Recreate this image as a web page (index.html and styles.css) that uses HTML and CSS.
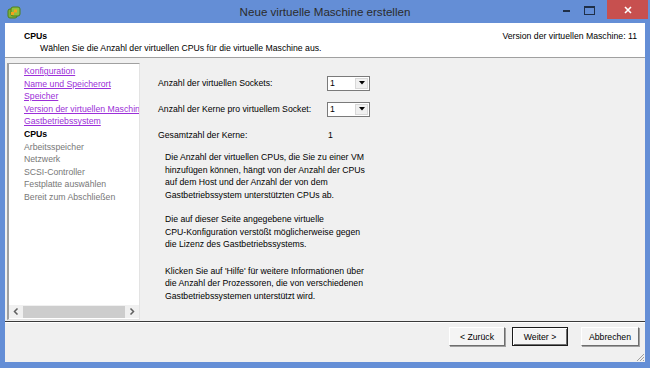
FILE: index.html
```html
<!DOCTYPE html>
<html lang="de">
<head>
<meta charset="utf-8">
<title>Neue virtuelle Maschine erstellen</title>
<link rel="stylesheet" href="styles.css">
</head>
<body>
<div class="window">
  <div class="titlebar">
    <div class="app-icon">
      <svg width="14" height="14" viewBox="0 0 14 14">
        <rect x="1" y="3" width="9" height="9" rx="2" fill="#7fb13a" stroke="#4d7f1e" stroke-width="1"/>
        <rect x="4" y="1" width="9" height="9" rx="2" fill="#8cc041" stroke="#4d7f1e" stroke-width="1"/>
        <rect x="4" y="6" width="3" height="3" fill="#f3a21b"/>
        <rect x="7" y="3.5" width="3" height="3" fill="#f3a21b"/>
      </svg>
    </div>
    <div class="title">Neue virtuelle Maschine erstellen</div>
    <div class="controls">
      <span class="ctl min"></span>
      <span class="ctl max"></span>
      <span class="ctl close">
        <svg width="8" height="8" viewBox="0 0 8 8"><path d="M1 1L7 7M7 1L1 7" stroke="#fff" stroke-width="1.6"/></svg>
      </span>
    </div>
  </div>

  <div class="header">
    <div class="header-text">
      <div class="h-title">CPUs</div>
      <div class="h-sub">Wählen Sie die Anzahl der virtuellen CPUs für die virtuelle Maschine aus.</div>
    </div>
    <div class="h-version">Version der virtuellen Maschine: 11</div>
  </div>

  <div class="main">
    <div class="nav">
      <ul class="nav-list">
        <li><a class="link">Konfiguration</a></li>
        <li><a class="link">Name und Speicherort</a></li>
        <li><a class="link">Speicher</a></li>
        <li><a class="link">Version der virtuellen Maschine</a></li>
        <li><a class="link">Gastbetriebssystem</a></li>
        <li class="current">CPUs</li>
        <li class="disabled">Arbeitsspeicher</li>
        <li class="disabled">Netzwerk</li>
        <li class="disabled">SCSI-Controller</li>
        <li class="disabled">Festplatte auswählen</li>
        <li class="disabled">Bereit zum Abschließen</li>
      </ul>
      <div class="hscroll">
        <span class="arrow"><svg width="6" height="7" viewBox="0 0 6 7"><path d="M4.5 0.5L1.5 3.5L4.5 6.5" fill="none" stroke="#606060" stroke-width="1.5"/></svg></span>
        <span class="thumb"></span>
        <span class="arrow"><svg width="6" height="7" viewBox="0 0 6 7"><path d="M1.5 0.5L4.5 3.5L1.5 6.5" fill="none" stroke="#606060" stroke-width="1.5"/></svg></span>
      </div>
    </div>

    <div class="content">
      <div class="field">
        <span class="label">Anzahl der virtuellen Sockets:</span>
        <span class="select"><span class="val">1</span><span class="drop"><svg width="6" height="4" viewBox="0 0 6 4"><path d="M0 0H6L3 3.5Z" fill="#000"/></svg></span></span>
      </div>
      <div class="field">
        <span class="label">Anzahl der Kerne pro virtuellem Socket:</span>
        <span class="select"><span class="val">1</span><span class="drop"><svg width="6" height="4" viewBox="0 0 6 4"><path d="M0 0H6L3 3.5Z" fill="#000"/></svg></span></span>
      </div>
      <div class="field">
        <span class="label">Gesamtzahl der Kerne:</span>
        <span class="value">1</span>
      </div>

      <p class="info">Die Anzahl der virtuellen CPUs, die Sie zu einer VM<br>hinzufügen können, hängt von der Anzahl der CPUs<br>auf dem Host und der Anzahl der von dem<br>Gastbetriebssystem unterstützten CPUs ab.</p>
      <p class="info">Die auf dieser Seite angegebene virtuelle<br>CPU-Konfiguration verstößt möglicherweise gegen<br>die Lizenz des Gastbetriebssystems.</p>
      <p class="info">Klicken Sie auf 'Hilfe' für weitere Informationen über<br>die Anzahl der Prozessoren, die von verschiedenen<br>Gastbetriebssystemen unterstützt wird.</p>
    </div>
  </div>

  <div class="footer">
    <button class="btn">&lt; Zurück</button>
    <button class="btn default">Weiter &gt;</button>
    <button class="btn cancel">Abbrechen</button>
    <span class="grip">
      <svg width="10" height="10" viewBox="0 0 10 10"><path d="M9 2L2 9M9 5L5 9M9 8L8 9" stroke="#a0a0a0" stroke-width="1"/></svg>
    </span>
  </div>
</div>
</body>
</html>
```

FILE: styles.css
```css
* { box-sizing: border-box; }
html, body { margin: 0; padding: 0; }
body {
  width: 650px;
  height: 368px;
  overflow: hidden;
  font-family: "Liberation Sans", Arial, sans-serif;
  font-size: 8.7px;
  color: #000;
}
.window {
  width: 650px;
  height: 368px;
  background: #648ed6;
  padding: 0 5px 6px 5px;
  display: flex;
  flex-direction: column;
}
.titlebar {
  height: 23px;
  margin: 0 -5px;
  display: flex;
  align-items: flex-start;
  position: relative;
}
.app-icon {
  width: 14px;
  height: 14px;
  margin: 6px 0 0 7px;
}
.title {
  position: absolute;
  left: 0;
  right: 0;
  top: 4px;
  text-align: center;
  font-size: 11.6px;
  color: #2b2b2b;
  line-height: 16px;
}
.controls {
  margin-left: auto;
  display: flex;
  align-items: flex-start;
  height: 20px;
}
.ctl {
  display: flex;
  align-items: center;
  justify-content: center;
  height: 20px;
}
.min { width: 26px; position: relative; }
.min::after {
  content: "";
  position: absolute;
  left: 10px;
  top: 10px;
  width: 7px;
  height: 2px;
  background: #1f2f48;
}
.max { width: 20px; position: relative; }
.max::after {
  content: "";
  position: absolute;
  left: 5px;
  top: 6px;
  width: 9px;
  height: 6px;
  border: 1px solid #1f2f48;
  border-top-width: 2px;
}
.close {
  width: 41px;
  height: 19px;
  margin-left: 8px;
  margin-right: 2px;
  background: #c7504f;
}

.header {
  height: 35px;
  background: #fff;
  border-bottom: 1px solid #a0a0a0;
  display: flex;
  justify-content: space-between;
  padding: 7px 8px 0 19px;
  line-height: 12px;
}
.h-title { font-weight: bold; }
.h-sub { padding-left: 16px; }
.h-version { padding-top: 0; }

.main {
  flex: 1;
  background: #f0f0f0;
  display: flex;
  padding: 5px 0 1px 2px;
}
.nav {
  width: 133px;
  background: #fff;
  border-left: 2px solid #a0a0a0;
  border-top: 1px solid #a0a0a0;
  border-right: 1px solid #e3e3e3;
  border-bottom: 1px solid #e3e3e3;
  display: flex;
  flex-direction: column;
  overflow: hidden;
}
.nav-list {
  list-style: none;
  margin: 0;
  padding: 1px 0 0 15px;
  flex: 1;
  line-height: 12.6px;
  white-space: nowrap;
  overflow: hidden;
}
.link {
  color: #9b2fd8;
  text-decoration: underline;
}
.current { font-weight: bold; }
.disabled { color: #777; }
.hscroll {
  height: 13px;
  margin-bottom: 1px;
  display: flex;
  align-items: center;
  background: #f0f0f0;
}
.arrow {
  width: 14px;
  display: flex;
  justify-content: center;
}
.thumb {
  flex: 1;
  height: 12px;
  background: #cdcdcd;
}

.content {
  flex: 1;
  padding: 7px 0 0 18px;
}
.field {
  height: 26px;
  display: flex;
  align-items: center;
}
.label { width: 169px; }
.select {
  width: 43px;
  height: 15px;
  border: 1px solid #7a7a7a;
  background: #fff;
  display: flex;
  align-items: stretch;
}
.val {
  flex: 1;
  padding-left: 2px;
  line-height: 13px;
}
.drop {
  width: 13px;
  margin: 1px;
  background: #f0f0f0;
  border: 1px solid #d8d8d8;
  display: flex;
  align-items: center;
  justify-content: center;
}
.value { padding-left: 1px; }
.info {
  margin: 0 0 0 7px;
  line-height: 12.5px;
}
.info:nth-of-type(1) { margin-top: 3px; }
.info:nth-of-type(2) { margin-top: 12px; }
.info:nth-of-type(3) { margin-top: 14px; }

.footer {
  height: 41px;
  background: #f0f0f0;
  border-top: 1px solid #3a3a3a;
  box-shadow: inset 0 1px 0 #fff;
  display: flex;
  align-items: flex-start;
  padding: 5px 6px 0 0;
  justify-content: flex-end;
  position: relative;
}
.btn {
  height: 19px;
  width: 56px;
  font-family: inherit;
  font-size: 8.7px;
  color: #000;
  background: #f4f4f4;
  border: 1px solid;
  border-color: #fff #6e6e6e #6e6e6e #fff;
  box-shadow: 1px 1px 0 #a0a0a0;
  padding: 0;
  margin-left: 7px;
}
.btn.default {
  border: 1px solid #1a1a1a;
  box-shadow: inset 1px 1px 0 #fff, inset -1px -1px 0 #6e6e6e;
}
.btn.cancel {
  width: 58px;
  margin-left: 13px;
}
.grip {
  position: absolute;
  right: 0;
  bottom: 0;
  width: 10px;
  height: 10px;
}
```
